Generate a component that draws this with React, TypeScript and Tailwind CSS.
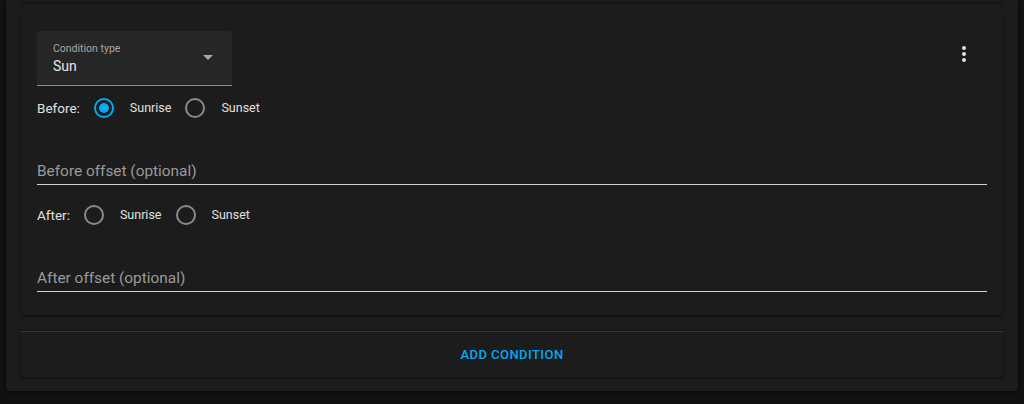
import React from 'react';

const Radio = ({ checked, label }: { checked: boolean; label: string }) => (
  <div className="flex items-center">
    <div className="w-[40px] h-[40px] flex items-center justify-center">
      <div
        className={`w-[20px] h-[20px] rounded-full border-2 flex items-center justify-center ${
          checked ? 'border-[#03a9f4]' : 'border-[#8a8a8a]'
        }`}
      >
        {checked && <div className="w-[10px] h-[10px] rounded-full bg-[#03a9f4]" />}
      </div>
    </div>
    <span className="pl-[6px] text-[12.5px] text-[#e1e1e1]">{label}</span>
  </div>
);

const RadioRow = ({ title, value }: { title: string; value: 'sunrise' | 'sunset' | null }) => (
  <div className="h-[40px] flex items-center">
    <span className="text-[13.5px] text-[#e1e1e1] mr-[4px]">{title}</span>
    <Radio checked={value === 'sunrise'} label="Sunrise" />
    <div className="w-[4px]" />
    <Radio checked={value === 'sunset'} label="Sunset" />
  </div>
);

const OffsetField = ({ label }: { label: string }) => (
  <div className="h-[57px] flex flex-col justify-end">
    <div className="text-[15.4px] leading-6 text-[#9a9a9a] pb-[1px]">{label}</div>
    <div className="h-[1px] bg-[#d2d2d2]" />
  </div>
);

export default function App() {
  return (
    <div className="min-h-screen bg-[#111111] font-['Roboto',sans-serif] overflow-hidden">
      <div className="mx-[6px] bg-[#1c1c1c] rounded-b-[4px] px-[15px] pb-[14px] shadow-[0_1px_3px_rgba(0,0,0,0.5)]">
        {/* bottom edge of the previous condition card */}
        <div className="h-[2px] bg-[#1c1c1c] rounded-b-[4px] shadow-[0_1px_2px_rgba(0,0,0,0.6)]" />

        <div className="mt-[14px] rounded-[4px] bg-[#1c1c1c] shadow-[0_1px_3px_rgba(0,0,0,0.55)] pt-[15px] px-[16px] pb-[23px]">
          <div className="flex items-start justify-between">
            <div className="w-[195px] h-[55px] bg-[#262626] rounded-t-[4px] border-b border-[#8a8a8a] pl-[16px] pr-[19px] flex items-center justify-between">
              <div className="flex flex-col pt-[1px]">
                <span className="text-[10.5px] leading-[14px] text-[#a8a8a8]">Condition type</span>
                <span className="text-[14px] leading-[20px] text-[#e8e8e8]">Sun</span>
              </div>
              <svg width="10" height="5" viewBox="0 0 10 5" className="mt-[-2px]">
                <path d="M0 0 L10 0 L5 5 Z" fill="#a8a8a8" />
              </svg>
            </div>
            <button className="w-[48px] h-[48px] mt-[-1px] mr-[-1px] flex items-center justify-center text-[#e1e1e1]">
              <svg width="24" height="24" viewBox="0 0 24 24" fill="currentColor">
                <path d="M12,16A2,2 0 0,1 14,18A2,2 0 0,1 12,20A2,2 0 0,1 10,18A2,2 0 0,1 12,16M12,10A2,2 0 0,1 14,12A2,2 0 0,1 12,14A2,2 0 0,1 10,12A2,2 0 0,1 12,10M12,4A2,2 0 0,1 14,6A2,2 0 0,1 12,8A2,2 0 0,1 10,6A2,2 0 0,1 12,4Z" />
              </svg>
            </button>
          </div>

          <div className="mt-[2px]">
            <RadioRow title="Before:" value="sunrise" />
          </div>
          <OffsetField label="Before offset (optional)" />

          <div className="mt-[10px]">
            <RadioRow title="After:" value={null} />
          </div>
          <OffsetField label="After offset (optional)" />
        </div>

        <div className="mt-[16px] h-[46px] rounded-b-[4px] border-t border-[#363636] bg-[#1c1c1c] shadow-[0_1px_3px_rgba(0,0,0,0.55)] flex items-center justify-center">
          <button className="text-[13px] font-medium tracking-[0.035em] text-[#03a9f4] uppercase">
            Add condition
          </button>
        </div>
      </div>
    </div>
  );
}
